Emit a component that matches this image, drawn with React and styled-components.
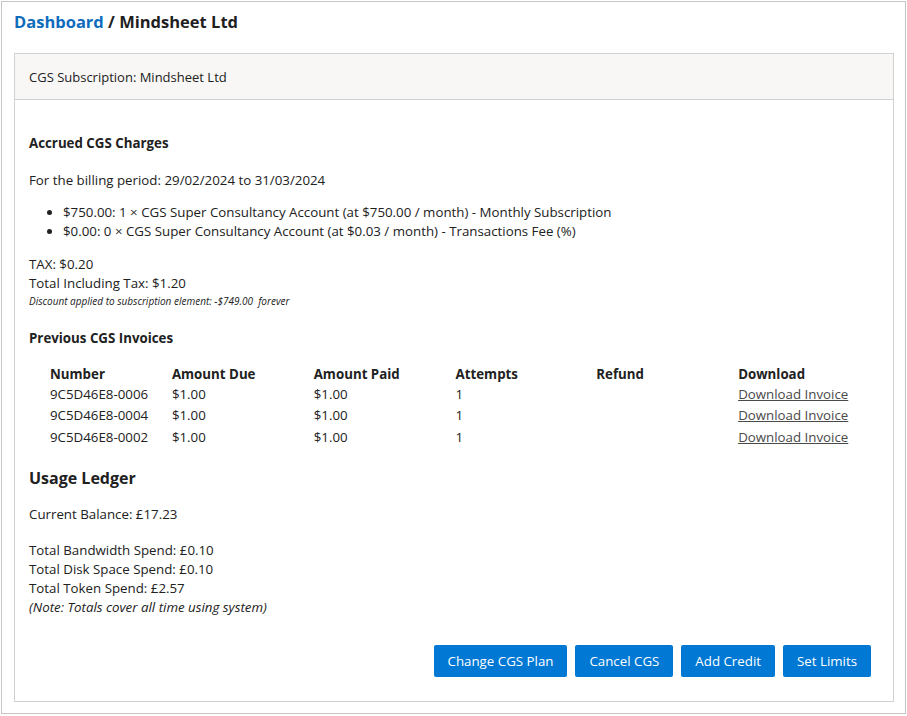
import styled, { createGlobalStyle } from 'styled-components'

const Global = createGlobalStyle`
  html, body { margin: 0; padding: 0; background: #ffffff; }
  body {
    font-family: "Open Sans", "Noto Sans", sans-serif;
    font-size: 13.3px;
    color: #212121;
  }
`

const Frame = styled.div`
  margin: 1px;
  width: 905px;
  height: 713px;
  border: 1px solid #c6c6c6;
  box-sizing: border-box;
  padding: 8px 12px 0 12px;
`

const Crumbs = styled.h1`
  margin: 0 0 19px 0;
  font-size: 16.5px;
  font-weight: 700;
  line-height: 24px;
  color: #1f1f1f;
  a { color: #0f6cbd; text-decoration: none; }
`

const Card = styled.div`
  width: 880px;
  height: 649px;
  box-sizing: border-box;
  border: 1px solid #d1d1d1;
  display: flex;
  flex-direction: column;
`

const CardHeader = styled.div`
  height: 46px;
  box-sizing: border-box;
  background: #f8f7f6;
  border-bottom: 1px solid #d1d1d1;
  padding: 0 14px;
  display: flex;
  align-items: center;
  font-size: 13px;
`

const CardBody = styled.div`
  flex: 1;
  padding: 33px 14px 0 14px;
  display: flex;
  flex-direction: column;
`

const SubTitle = styled.h3`
  margin: ${p => p.$top || 0}px 0 0 0;
  font-size: 13.3px;
  font-weight: 700;
  line-height: 20px;
`

const Para = styled.p`
  margin: ${p => p.$top || 0}px 0 0 0;
  line-height: 19px;
`

const Bullets = styled.ul`
  margin: 13px 0 0 0;
  padding-left: 34px;
  li { line-height: 18.5px; }
`

const Small = styled.div`
  font-size: 10px;
  font-style: italic;
  line-height: 16px;
`

const Table = styled.table`
  margin: 16px 0 0 20px;
  border-collapse: collapse;
  th, td { padding: 0 0 0 1px; text-align: left; }
  th { font-weight: 700; line-height: 20px; }
  td { line-height: 22px; }
  tbody tr:first-child td { line-height: 20px; }
`

const Col = styled.col`
  width: ${p => p.$w}px;
`

const Link = styled.a`
  color: #4a4a4a;
  text-decoration: underline;
`

const Heading = styled.h2`
  margin: 18px 0 0 0;
  font-size: 16px;
  font-weight: 700;
  line-height: 24px;
`

const Actions = styled.div`
  margin-top: auto;
  margin-bottom: 24px;
  margin-right: 8px;
  display: flex;
  justify-content: flex-end;
  gap: 8px;
`

const Button = styled.button`
  height: 32px;
  padding: 0 14px;
  border: none;
  border-radius: 2px;
  background: #0078d4;
  color: #ffffff;
  font-family: inherit;
  font-size: 13.3px;
  cursor: pointer;
`

const invoices = ['9C5D46E8-0006', '9C5D46E8-0004', '9C5D46E8-0002']

export default function App() {
  return (
    <>
      <Global />
      <Frame>
        <Crumbs><a href="#">Dashboard</a> / Mindsheet Ltd</Crumbs>
        <Card>
          <CardHeader>CGS Subscription: Mindsheet Ltd</CardHeader>
          <CardBody>
            <SubTitle>Accrued CGS Charges</SubTitle>
            <Para $top={18}>For the billing period: 29/02/2024 to 31/03/2024</Para>
            <Bullets>
              <li>$750.00: 1 × CGS Super Consultancy Account (at $750.00 / month) - Monthly Subscription</li>
              <li>$0.00: 0 × CGS Super Consultancy Account (at $0.03 / month) - Transactions Fee (%)</li>
            </Bullets>
            <Para $top={15}>TAX: $0.20</Para>
            <Para>Total Including Tax: $1.20</Para>
            <Small>Discount applied to subscription element: -$749.00&nbsp; forever</Small>
            <SubTitle $top={19}>Previous CGS Invoices</SubTitle>
            <Table>
              <colgroup>
                <Col $w={122} />
                <Col $w={142} />
                <Col $w={142} />
                <Col $w={141} />
                <Col $w={142} />
                <Col $w={142} />
              </colgroup>
              <thead>
                <tr>
                  <th>Number</th>
                  <th>Amount Due</th>
                  <th>Amount Paid</th>
                  <th>Attempts</th>
                  <th>Refund</th>
                  <th>Download</th>
                </tr>
              </thead>
              <tbody>
                {invoices.map(n => (
                  <tr key={n}>
                    <td>{n}</td>
                    <td>$1.00</td>
                    <td>$1.00</td>
                    <td>1</td>
                    <td></td>
                    <td><Link href="#">Download Invoice</Link></td>
                  </tr>
                ))}
              </tbody>
            </Table>
            <Heading>Usage Ledger</Heading>
            <Para $top={15}>Current Balance: £17.23</Para>
            <Para $top={17}>Total Bandwidth Spend: £0.10</Para>
            <Para>Total Disk Space Spend: £0.10</Para>
            <Para>Total Token Spend: £2.57</Para>
            <Para><em>(Note: Totals cover all time using system)</em></Para>
            <Actions>
              <Button>Change CGS Plan</Button>
              <Button>Cancel CGS</Button>
              <Button>Add Credit</Button>
              <Button>Set Limits</Button>
            </Actions>
          </CardBody>
        </Card>
      </Frame>
    </>
  )
}
